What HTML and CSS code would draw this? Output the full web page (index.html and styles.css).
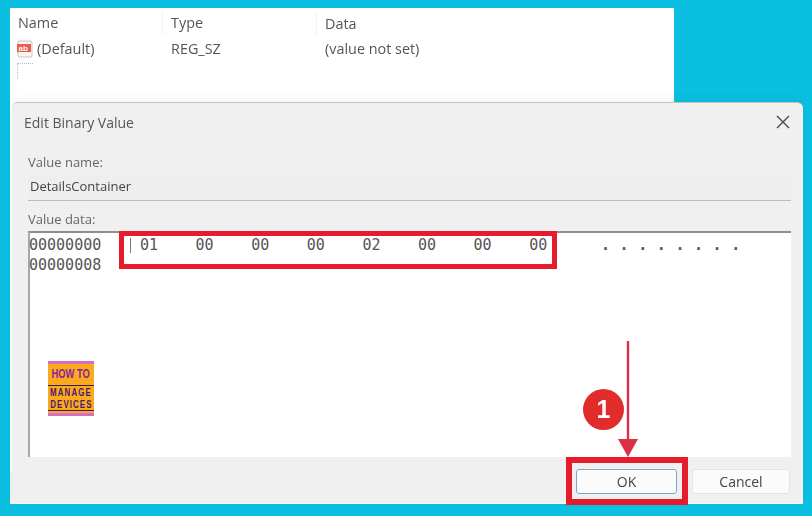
FILE: index.html
```html
<!DOCTYPE html>
<html>
<head>
    <meta charset="UTF-8">
    <title>Edit Binary Value</title>
    <link rel="stylesheet" href="styles.css">
</head>
<body>
    <!-- registry window behind the dialog -->
    <div class="reg-window">
        <div class="reg-row reg-head">
            <span class="col-name head-cell">Name</span>
            <span class="col-type head-cell">Type</span>
            <span class="col-data">Data</span>
        </div>
        <div class="reg-row">
            <span class="col-name">
                <svg class="ab-icon" width="18" height="18" viewBox="0 0 18 18">
                    <path d="M2 1h13l1 1v14l-1 1H3l-1-1z" fill="#fbf3f2" stroke="#c9c4c8"/>
                    <rect x="1" y="4" width="14" height="8" fill="#e8604c"/>
                    <text x="2.5" y="11" class="ab-text">ab</text>
                </svg>
                (Default)
            </span>
            <span class="col-type">REG_SZ</span>
            <span class="col-data">(value not set)</span>
        </div>
        <div class="new-value"></div>
    </div>
    <div class="stray-tick"></div>

    <!-- dialog -->
    <div class="dialog">
        <div class="dialog-inner">
            <div class="dialog-title">
                <span>Edit Binary Value</span>
                <svg width="14" height="14" viewBox="0 0 14 14">
                    <path d="M1 1l12 12M13 1L1 13" stroke="#4a4a4a" stroke-width="1.4" fill="none"/>
                </svg>
            </div>
            <div class="label">Value name:</div>
            <div class="name-field">DetailsContainer</div>
            <div class="label data-label">Value data:</div>
            <div class="hex-box">
                <div class="hex-row">
                    <span class="hex-addr">00000000</span>
                    <span class="caret"></span>
                    <div class="hex-bytes">
                        <span>01</span><span>00</span><span>00</span><span>00</span>
                        <span>02</span><span>00</span><span>00</span><span>00</span>
                    </div>
                    <div class="hex-ascii">
                        <span>.</span><span>.</span><span>.</span><span>.</span>
                        <span>.</span><span>.</span><span>.</span><span>.</span>
                    </div>
                </div>
                <div class="hex-row">
                    <span class="hex-addr">00000008</span>
                </div>
                <div class="logo">
                    <div class="logo-how"><span>HOW TO</span></div>
                    <div class="logo-manage"><span>MANAGE</span><span>DEVICES</span></div>
                </div>
            </div>
            <div class="dialog-buttons">
                <button class="btn btn-ok">OK</button>
                <button class="btn">Cancel</button>
            </div>
        </div>
    </div>

    <!-- annotations -->
    <div class="mark mark-hex"></div>
    <div class="mark mark-ok"></div>
    <svg class="arrow" width="24" height="118" viewBox="0 0 24 118">
        <path d="M12 0V100" stroke="#dc3045" stroke-width="2.4"/>
        <path d="M2 98h20l-10 18z" fill="#dc3045"/>
    </svg>
    <div class="step">1</div>
</body>
</html>
```

FILE: styles.css
```css
body {
    margin: 0;
    width: 812px;
    height: 516px;
    position: relative;
    overflow: hidden;
    background: #0bbfe0;
    font-family: "Open Sans", "Liberation Sans", sans-serif;
    color: #4c4c4c;
}

/* registry window */
.reg-window {
    position: absolute;
    left: 10px;
    top: 8px;
    width: 664px;
    height: 496px;
    background: linear-gradient(#fff 464px, #f2f2f2 464px);
    font-size: 14.4px;
    color: #555;
    filter: blur(0.4px);
}

.reg-row {
    display: flex;
    align-items: center;
    height: 21px;
}

.reg-head {
    height: 28px;
    padding-top: 2px;
    box-sizing: border-box;
    margin-bottom: 2px;
}

.col-name {
    width: 153px;
    padding-left: 8px;
    box-sizing: border-box;
    display: flex;
    align-items: center;
    gap: 3px;
}

.col-type {
    width: 154px;
    padding-left: 8px;
    box-sizing: border-box;
}

.col-data {
    padding-left: 8px;
}

.head-cell {
    border-right: 1px solid #f2f2f2;
    line-height: 24px;
}

.ab-icon {
    margin-left: -2px;
}

.ab-text {
    font-family: "Liberation Sans", sans-serif;
    font-size: 8px;
    font-weight: bold;
    fill: #fff;
}

.new-value {
    width: 15px;
    height: 15px;
    margin: 4px 0 0 7px;
    border-top: 1px dotted #b8bcd0;
    border-left: 1px dotted #b8bcd0;
}

.stray-tick {
    position: absolute;
    left: 14px;
    top: 256px;
    width: 2px;
    height: 8px;
    background: #777;
}

/* dialog */
.dialog {
    position: absolute;
    left: 12px;
    top: 102px;
    width: 791px;
    height: 402px;
    box-sizing: border-box;
    background: #f0f0f0;
    border-top: 1px solid #c4c4c4;
    border-bottom: 1px solid #f8f8f8;
    border-radius: 6px 6px 0 0;
    box-shadow: 0 -4px 8px rgba(0, 0, 0, 0.04);
}

.dialog-inner {
    padding: 0 12px 0 16px;
    filter: blur(0.4px);
}

.dialog-title {
    display: flex;
    justify-content: space-between;
    align-items: center;
    height: 38px;
    margin-left: -4px;
    padding-right: 1px;
    font-size: 14px;
    color: #555;
}

.label {
    margin-top: 13px;
    font-size: 13px;
    line-height: 16px;
    color: #666;
}

.data-label {
    margin-top: 10px;
}

.name-field {
    height: 25px;
    margin-top: 5px;
    padding-left: 2px;
    line-height: 23px;
    font-size: 13px;
    color: #444;
    border-bottom: 1px solid #bdbdbd;
    background: #eeeeee;
}

.hex-box {
    position: relative;
    height: 226px;
    margin-top: 4px;
    padding-top: 2px;
    box-sizing: border-box;
    background: #fff;
    border-top: 2px solid #8f8f8f;
    border-left: 2px solid #a8a8a8;
    font-family: "DejaVu Sans Mono", monospace;
    font-size: 15px;
    color: #555;
}

.hex-row {
    display: flex;
    align-items: center;
    height: 20px;
}

.hex-addr {
    width: 101px;
    margin-left: -1px;
}

.caret {
    width: 1px;
    height: 15px;
    background: #777;
}

.hex-bytes {
    display: grid;
    grid-template-columns: repeat(8, 55.6px);
    width: 465px;
    margin-left: 9px;
}

.hex-ascii {
    display: grid;
    grid-template-columns: repeat(8, 18.6px);
    margin-left: -4px;
    font-weight: bold;
}

/* watermark logo */
.logo {
    position: absolute;
    left: 18px;
    top: 128px;
    width: 46px;
    height: 55px;
    box-sizing: border-box;
    border-top: 3px solid #d56fc4;
    border-bottom: 3px solid #d56fc4;
    background: #fbaa1e;
    font-family: "Liberation Sans", sans-serif;
    font-weight: bold;
    color: #8a1fa0;
}

.logo-how,
.logo-manage {
    display: flex;
    flex-direction: column;
    align-items: center;
    white-space: nowrap;
}

.logo-how {
    font-size: 13px;
    line-height: 20px;
}

.logo-how span,
.logo-manage span {
    transform: scaleX(0.72);
}

.logo-manage {
    height: 24px;
    margin-top: 1px;
    border-top: 1px solid #3a1a50;
    border-bottom: 1px solid #3a1a50;
    font-size: 11px;
    line-height: 12px;
    letter-spacing: 1.5px;
    color: #4b1a6e;
}

/* buttons */
.dialog-buttons {
    display: flex;
    justify-content: flex-end;
    gap: 15px;
    margin-top: 12px;
    padding-right: 1px;
}

.btn {
    width: 98px;
    height: 25px;
    padding: 0;
    background: #fbfbfb;
    border: 1px solid #e4e4e4;
    border-radius: 3px;
    font-family: "Open Sans", "Liberation Sans", sans-serif;
    font-size: 14px;
    color: #444;
}

.btn-ok {
    width: 101px;
    border: 1px solid #7ea6c4;
}

/* red annotations */
.mark {
    position: absolute;
    box-sizing: border-box;
    border-style: solid;
    border-color: #e61c2c;
}

.mark-hex {
    left: 119px;
    top: 231px;
    width: 438px;
    height: 38px;
    border-width: 5px;
}

.mark-ok {
    left: 566px;
    top: 457px;
    width: 122px;
    height: 48px;
    border-width: 6px;
}

.arrow {
    position: absolute;
    left: 616px;
    top: 341px;
}

.step {
    position: absolute;
    left: 583px;
    top: 389px;
    width: 41px;
    height: 41px;
    border-radius: 50%;
    background: #e22b2b;
    color: #fff;
    font-family: "Liberation Sans", sans-serif;
    font-size: 25px;
    font-weight: bold;
    line-height: 41px;
    text-align: center;
}
```
